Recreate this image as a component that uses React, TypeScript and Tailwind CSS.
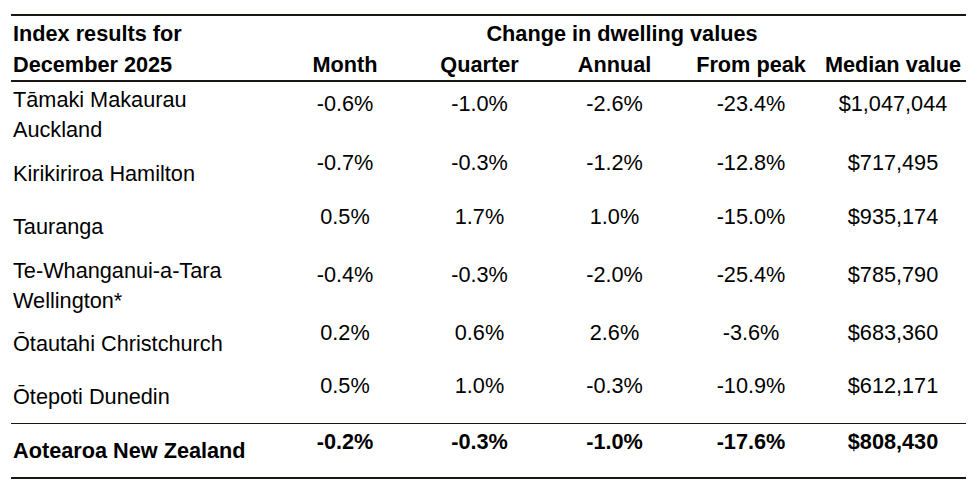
import React from "react";

const rows: { name: React.ReactNode; h: string; v: string[] }[] = [
  { name: <>Tāmaki Makaurau<br />Auckland</>, h: "h-[65px]", v: ["-0.6%", "-1.0%", "-2.6%", "-23.4%", "$1,047,044"] },
  { name: "Kirikiriroa Hamilton", h: "h-[53px]", v: ["-0.7%", "-0.3%", "-1.2%", "-12.8%", "$717,495"] },
  { name: "Tauranga", h: "h-[54px]", v: ["0.5%", "1.7%", "1.0%", "-15.0%", "$935,174"] },
  { name: <>Te-Whanganui-a-Tara<br />Wellington*</>, h: "h-[63px]", v: ["-0.4%", "-0.3%", "-2.0%", "-25.4%", "$785,790"] },
  { name: "Ōtautahi Christchurch", h: "h-[53px]", v: ["0.2%", "0.6%", "2.6%", "-3.6%", "$683,360"] },
  { name: "Ōtepoti Dunedin", h: "h-[53px]", v: ["0.5%", "1.0%", "-0.3%", "-10.9%", "$612,171"] },
];

const colW = ["w-[134px]", "w-[135px]", "w-[135px]", "w-[138px]", "w-[146px]"];
const headers = ["Month", "Quarter", "Annual", "From peak", "Median value"];

export default function App() {
  return (
    <div
      className="w-[976px] h-[486px] bg-white text-black pt-[14px] pl-[11px]"
      style={{ fontFamily: '"Liberation Sans", Arial, sans-serif' }}
    >
      <div className="w-[955px] text-[21.7px]">
        {/* Header */}
        <div className="border-t-2 border-b-2 border-[#1c1610] pt-[2px] leading-[31px] font-bold flex">
          <div className="w-[267px] pl-[2px]">
            Index results for
            <br />
            December 2025
          </div>
          <div className="flex flex-col">
            <div className="text-center">Change in dwelling values</div>
            <div className="flex">
              {headers.map((h, i) => (
                <div key={h} className={`${colW[i]} text-center whitespace-nowrap`}>
                  {h}
                </div>
              ))}
            </div>
          </div>
        </div>
        {/* Body */}
        <div className="leading-[30px]">
          {rows.map((r, ri) => (
            <div key={ri} className={`flex items-center ${r.h}`}>
              <div className="w-[267px] pl-[2px]">{r.name}</div>
              {r.v.map((v, i) => (
                <div key={i} className={`${colW[i]} text-center pb-[21px]`}>
                  {v}
                </div>
              ))}
            </div>
          ))}
          <div className="flex items-center h-[56px] border-t border-b-2 border-[#1c1610] font-bold">
            <div className="w-[267px] pl-[2px]">Aotearoa New Zealand</div>
            {["-0.2%", "-0.3%", "-1.0%", "-17.6%", "$808,430"].map((v, i) => (
              <div key={i} className={`${colW[i]} text-center pb-[18px]`}>
                {v}
              </div>
            ))}
          </div>
        </div>
      </div>
    </div>
  );
}
